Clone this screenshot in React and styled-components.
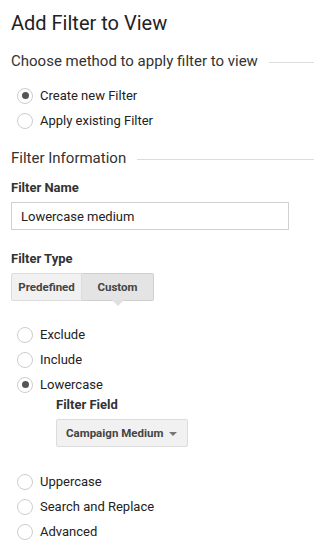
import styled, { createGlobalStyle } from 'styled-components';

const GlobalStyle = createGlobalStyle`
	body {
		margin: 0;
		background: #fff;
		font-family: Roboto, "Liberation Sans", sans-serif;
		color: #222;
	}
`;

const Page = styled.div`
	padding: 11px 0 0 11px;
	display: flex;
	flex-direction: column;
`;

const Title = styled.h1`
	margin: 0;
	font-size: 20px;
	font-weight: 400;
	line-height: 24px;
	color: #222;
`;

const SectionHead = styled.div`
	display: flex;
	align-items: center;
	gap: 11px;
	margin-top: ${(p) => p.$top}px;
	font-size: 15px;
	line-height: 20px;
	color: #333;

	&::after {
		content: '';
		flex: 1;
		height: 1px;
		background: #dcdcdc;
		margin-top: 2px;
	}
`;

const RadioList = styled.div`
	display: flex;
	flex-direction: column;
	margin-top: ${(p) => p.$top}px;
	padding-left: 6px;
`;

const RadioRow = styled.label`
	display: flex;
	align-items: center;
	gap: 7px;
	height: 25px;
	font-size: 13px;
	color: #222;
`;

const Circle = styled.span`
	box-sizing: border-box;
	width: 16px;
	height: 16px;
	border-radius: 50%;
	border: 1px solid #cdcdcd;
	background: #fff;
	display: flex;
	align-items: center;
	justify-content: center;

	&::after {
		content: '';
		width: 7px;
		height: 7px;
		border-radius: 50%;
		background: ${(p) => (p.$on ? '#555' : 'transparent')};
	}
`;

const Label = styled.div`
	margin-top: ${(p) => p.$top}px;
	font-size: 13px;
	font-weight: 700;
	line-height: 16px;
	color: #333;
`;

const Input = styled.div`
	box-sizing: border-box;
	margin-top: 6px;
	width: 278px;
	height: 28px;
	border: 1px solid #d0d0d0;
	padding: 0 9px;
	display: flex;
	align-items: center;
	font-size: 13px;
	color: #222;
`;

const Segmented = styled.div`
	display: flex;
	margin-top: 6px;
`;

const SegButton = styled.div`
	position: relative;
	box-sizing: border-box;
	height: 28px;
	width: ${(p) => p.$w}px;
	display: flex;
	align-items: center;
	justify-content: center;
	font-size: 11.5px;
	font-weight: 700;
	color: #444;
	background: ${(p) => (p.$active ? '#e4e4e4' : '#f1f1f1')};
	border: 1px solid ${(p) => (p.$active ? '#cfcfcf' : '#dcdcdc')};
	border-left-width: ${(p) => (p.$active ? 0 : 1)}px;
	border-radius: ${(p) => (p.$active ? '0 2px 2px 0' : '2px 0 0 2px')};

	&::after {
		content: '';
		display: ${(p) => (p.$active ? 'block' : 'none')};
		position: absolute;
		left: 50%;
		bottom: -6px;
		margin-left: -6px;
		border-left: 6px solid transparent;
		border-right: 6px solid transparent;
		border-top: 6px solid #e0e0e0;
	}
`;

const SubField = styled.div`
	display: flex;
	flex-direction: column;
	padding-left: 39px;
	margin-bottom: 22px;
`;

const Select = styled.div`
	box-sizing: border-box;
	margin-top: 6px;
	width: 132px;
	height: 28px;
	background: #f1f1f1;
	border: 1px solid #dcdcdc;
	border-radius: 2px;
	padding: 0 9px;
	display: flex;
	align-items: center;
	justify-content: space-between;
	font-size: 11.5px;
	font-weight: 700;
	color: #444;

	&::after {
		content: '';
		border-left: 4px solid transparent;
		border-right: 4px solid transparent;
		border-top: 4px solid #777;
		margin-top: 2px;
		margin-right: 1px;
	}
`;

const Radio = ({ on, children }) => (
	<RadioRow>
		<Circle $on={on} />
		{children}
	</RadioRow>
);

export default function App() {
	return (
		<>
			<GlobalStyle />
			<Page>
				<Title>Add Filter to View</Title>
				<SectionHead $top={16}>Choose method to apply filter to view</SectionHead>
				<RadioList $top={12}>
					<Radio on>Create new Filter</Radio>
					<Radio>Apply existing Filter</Radio>
				</RadioList>
				<SectionHead $top={15}>Filter Information</SectionHead>
				<Label $top={12}>Filter Name</Label>
				<Input>Lowercase medium</Input>
				<Label $top={21}>Filter Type</Label>
				<Segmented>
					<SegButton $w={71}>Predefined</SegButton>
					<SegButton $w={72} $active>Custom</SegButton>
				</Segmented>
				<RadioList $top={21}>
					<Radio>Exclude</Radio>
					<Radio>Include</Radio>
					<Radio on>Lowercase</Radio>
					<SubField>
						<Label $top={0}>Filter Field</Label>
						<Select>Campaign Medium</Select>
					</SubField>
					<Radio>Uppercase</Radio>
					<Radio>Search and Replace</Radio>
					<Radio>Advanced</Radio>
				</RadioList>
			</Page>
		</>
	);
}
